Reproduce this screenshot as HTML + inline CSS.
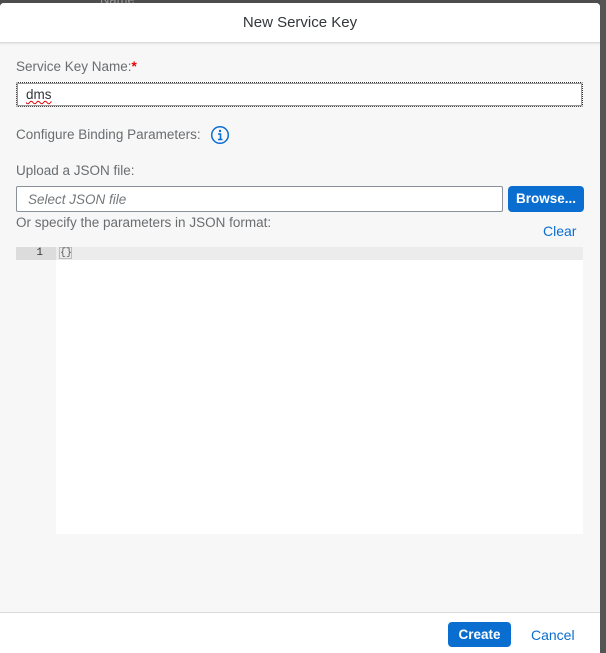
<!DOCTYPE html>
<html><head><style>
body{margin:0;width:606px;height:653px;background:#4d4d4d;font-family:"Liberation Sans",sans-serif;position:relative;overflow:hidden}
.d{position:absolute;left:0;top:3px;width:600px;height:650px;background:#f7f7f7;border-radius:4px 4px 0 0;overflow:hidden}
.h{position:absolute;left:0;top:0;width:600px;height:39px;background:#fff;border-bottom:1px solid #d9d9d9;box-shadow:0 1px 2px rgba(0,0,0,.08);text-align:center;line-height:39px;font-size:15px;color:#32363a}
.t{position:absolute;font-size:13.5px;color:#6a6d70;white-space:nowrap}
.in{position:absolute;background:#fff;border:1px solid #89919a;box-sizing:border-box;border-radius:2px}
.btn{position:absolute;background:#0a6ed1;color:#fff;font-weight:bold;font-size:13.5px;border-radius:4px;text-align:center}
.f{position:absolute;left:0;top:609px;width:600px;height:41px;background:#fff;border-top:1px solid #d9d9d9}
</style></head><body>
<div style="position:absolute;left:100px;top:-8px;color:#999;font-size:13px">Name</div>
<div style="position:absolute;left:600px;top:0;width:6px;height:653px;background:#555"></div>
<div class="d">
<div class="h">New Service Key</div>
<div class="t" style="left:16px;top:56px">Service Key Name:<span style="color:#e00;font-weight:bold">*</span></div>
<div class="in" style="left:16px;top:79px;width:567px;height:25px;border:1px dotted #333;outline:1px solid #999;outline-offset:-2px"><span style="position:absolute;left:9px;top:4px;font-size:13.5px;color:#32363a;text-decoration:underline wavy #d00;text-decoration-thickness:1px">dms</span></div>
<div class="t" style="left:16px;top:124px">Configure Binding Parameters:</div>
<svg style="position:absolute;left:210px;top:122px" width="20" height="20" viewBox="0 0 20 20"><circle cx="10" cy="10" r="8.3" fill="none" stroke="#0a6ed1" stroke-width="1.5"/><circle cx="10" cy="6" r="1.2" fill="#0a6ed1"/><path d="M8 9h2.5v5M8 14.5h4.5" stroke="#0a6ed1" stroke-width="1.6" fill="none"/></svg>
<div class="t" style="left:16px;top:160px">Upload a JSON file:</div>
<div class="in" style="left:16px;top:183px;width:487px;height:26px"><span style="position:absolute;left:11px;top:5px;font-size:13.5px;font-style:italic;color:#74777a">Select JSON file</span></div>
<div class="btn" style="left:508px;top:183px;width:76px;height:26px;line-height:26px">Browse...</div>
<div class="t" style="left:16px;top:212px">Or specify the parameters in JSON format:</div>
<div class="t" style="left:543px;top:220px;color:#0a6ed1;font-size:14px">Clear</div>
<div style="position:absolute;left:16px;top:244px;width:567px;height:13px;background:#ececec"></div>
<div style="position:absolute;left:16px;top:244px;width:40px;height:13px;background:#dcdcdc;font:11px 'Liberation Mono',monospace;color:#333;text-align:right;line-height:13px;box-sizing:border-box;padding-right:13px">1</div>
<div style="position:absolute;left:59px;top:244px;width:13px;height:12px;border:1px solid #bbb;box-sizing:border-box;font:10px 'Liberation Mono',monospace;color:#555;line-height:11px">{}</div>
<div style="position:absolute;left:56px;top:257px;width:527px;height:274px;background:#fff"></div>
<div class="f">
<div class="btn" style="left:448px;top:9px;width:63px;height:25px;line-height:25px">Create</div>
<div class="t" style="left:531px;top:14px;color:#0a6ed1;font-size:14px">Cancel</div>
</div>
</div>
</body></html>
